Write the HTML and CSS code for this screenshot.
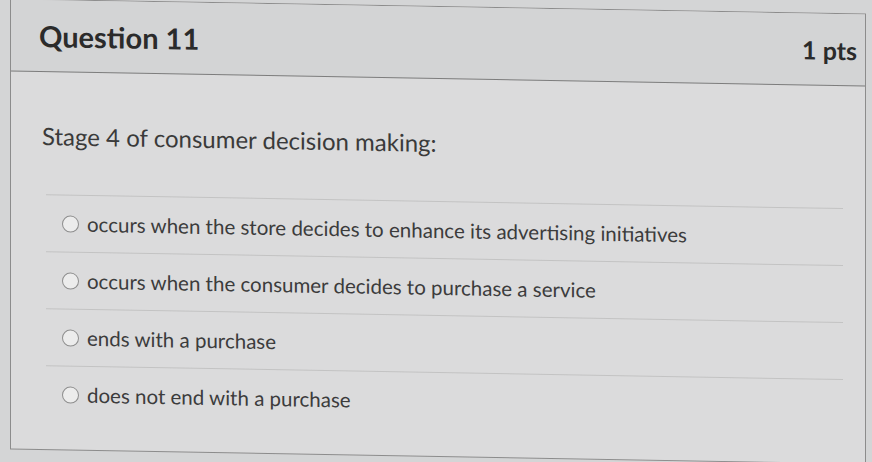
FILE: index.html
```html
<!DOCTYPE html>
<html>
<head>
<meta charset="utf-8">
<link rel="stylesheet" href="styles.css">
</head>
<body>
<div class="card">
  <div class="header">
    <span class="title">Question 11</span>
    <span class="pts">1 pts</span>
  </div>
  <div class="content">
    <p class="question">Stage 4 of consumer decision making:</p>
    <ul class="answers">
      <li class="answer"><span class="radio"></span><span class="label">occurs when the store decides to enhance its advertising initiatives</span></li>
      <li class="answer"><span class="radio"></span><span class="label">occurs when the consumer decides to purchase a service</span></li>
      <li class="answer"><span class="radio"></span><span class="label">ends with a purchase</span></li>
      <li class="answer"><span class="radio"></span><span class="label">does not end with a purchase</span></li>
    </ul>
  </div>
</div>
</body>
</html>
```
FILE: styles.css
```css
html, body {
  margin: 0;
  padding: 0;
  background: #d4d5d6;
  overflow: hidden;
  width: 872px;
  height: 462px;
}
body {
  font-family: Lato, "Open Sans", sans-serif;
  color: #2f2f2f;
}
.card {
  box-sizing: border-box;
  margin: 6px 0 0 10px;
  width: 856px;
  height: 451px;
  background: #dbdbdc;
  border: 1px solid #8c8c8c;
  transform: skewY(1deg);
  transform-origin: 50% 50%;
}
.header {
  box-sizing: border-box;
  height: 72px;
  display: flex;
  align-items: center;
  justify-content: space-between;
  padding: 0 8px 0 28px;
  background: #d3d4d5;
  border-bottom: 1px solid #7d7d7d;
}
.title {
  font-weight: 700;
  font-size: 29px;
  color: #2b2b2b;
}
.pts {
  font-weight: 700;
  font-size: 25px;
  color: #2b2b2b;
}
.content {
  padding: 0 22px 0 31px;
}
.question {
  margin: 0;
  padding-top: 50px;
  height: 122px;
  box-sizing: border-box;
  font-size: 24px;
  color: #3a3a3a;
  line-height: 28px;
}
.answers {
  list-style: none;
  margin: 0;
  padding: 0 0 0 4px;
}
.answer {
  display: flex;
  align-items: center;
  gap: 8px;
  height: 57px;
  border-top: 1px solid #c3c3c3;
  padding-left: 16px;
  box-sizing: border-box;
}
.radio {
  width: 15px;
  height: 15px;
  border-radius: 50%;
  border: 1.5px solid #8e8e8e;
  background: #ececec;
  flex: none;
}
.label {
  font-size: 20.5px;
  color: #3c3c3c;
}
```
